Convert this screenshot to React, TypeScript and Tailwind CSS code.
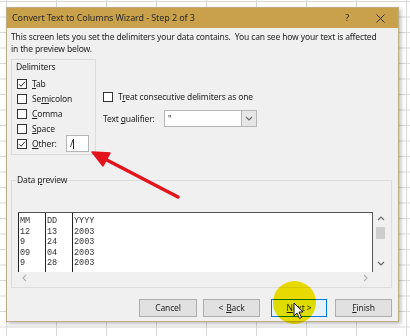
import React from "react";

function Check({ checked }: { checked?: boolean }) {
  return (
    <span className="w-[10px] h-[10px] shrink-0 border border-[#333] bg-white flex items-center justify-center">
      {checked && (
        <svg width="8" height="8" viewBox="0 0 8 8">
          <path d="M1 4.2 L3.1 6.3 L7 1.6" fill="none" stroke="#333" strokeWidth="1" />
        </svg>
      )}
    </span>
  );
}

function Row({ checked, children, w }: { checked?: boolean; children: React.ReactNode; w?: string }) {
  return (
    <div className="h-[15px] flex items-center">
      <Check checked={checked} />
      <span className={"ml-[5px] " + (w ?? "")}>{children}</span>
    </div>
  );
}

function Chevron({ dir, color = "#8a8a8a" }: { dir: "up" | "down" | "left" | "right"; color?: string }) {
  const d =
    dir === "up"
      ? "M1 5 L4 2 L7 5"
      : dir === "down"
      ? "M1 2 L4 5 L7 2"
      : dir === "left"
      ? "M5 1 L2 4 L5 7"
      : "M2 1 L5 4 L2 7";
  return (
    <svg width="8" height="8" viewBox="0 0 8 8">
      <path d={d} fill="none" stroke={color} strokeWidth="1.1" />
    </svg>
  );
}

const rows = [
  ["MM", "DD", "YYYY"],
  ["12", "13", "2003"],
  ["9", "24", "2003"],
  ["09", "04", "2003"],
  ["9", "28", "2003"],
];

export default function App() {
  return (
    <div className="relative w-[410px] h-[336px] overflow-hidden bg-white bg-[linear-gradient(to_right,#d8d8d8_1px,transparent_1px),linear-gradient(to_bottom,#d8d8d8_1px,transparent_1px)] bg-[size:50px_15.5px] bg-[position:6px_1px] pt-[7px] pl-[6px] font-['Noto_Sans',sans-serif] text-[8.5px] tracking-[-0.15px] text-[#1e1e1e]">
      {/* Dialog */}
      <div className="w-[393px] h-[315px] flex flex-col border border-[#bcae84] bg-[#f0f0f0] shadow-[2px_2px_4px_rgba(0,0,0,0.25)]">
        {/* Title bar */}
        <div className="h-[20px] shrink-0 bg-[#c9a14a] flex items-center pl-[5px] pr-[13px] text-[9px] tracking-[-0.1px] text-[#2a2a2a]">
          <span>Convert Text to Columns Wizard - Step 2 of 3</span>
          <span className="ml-auto mr-[27px]">?</span>
          <svg width="9" height="9" viewBox="0 0 9 9">
            <path d="M0.5 0.5 L8.5 8.5 M8.5 0.5 L0.5 8.5" stroke="#333" strokeWidth="1" />
          </svg>
        </div>

        {/* Body */}
        <div className="flex-1 flex flex-col pl-[4px] pr-[6px]">
          <div className="pt-[3px] leading-[12px] whitespace-nowrap">
            This screen lets you set the delimiters your data contains.&nbsp; You can see how your text is affected
            <br />
            in the preview below.
          </div>

          <div className="mt-[4px] flex leading-[12px]">
            <div className="w-[85px] h-[96px] border border-[#dcdcdc] pl-[5px] pt-[1px]">
              <div className="-ml-[1px]">Delimiters</div>
              <div className="mt-[3px]">
                <Row checked>
                  <u>T</u>ab
                </Row>
                <Row>
                  Se<u>m</u>icolon
                </Row>
                <Row>
                  <u>C</u>omma
                </Row>
                <Row>
                  <u>S</u>pace
                </Row>
                <div className="h-[15px] flex items-center">
                  <Check checked />
                  <span className="ml-[5px] w-[34px]">
                    <u>O</u>ther:
                  </span>
                  <div className="w-[23px] h-[17px] bg-white border border-[#b5b5b5] flex items-center pl-[3px]">
                    <span className="text-[9px]">/</span>
                    <span className="w-px h-[10px] bg-[#222]" />
                  </div>
                </div>
              </div>
            </div>

            <div className="ml-[7px] pt-[30px]">
              <Row>
                T<u>r</u>eat consecutive delimiters as one
              </Row>
              <div className="mt-[6px] h-[17px] flex items-center">
                <span className="w-[61px]">
                  Text <u>q</u>ualifier:
                </span>
                <div className="w-[93px] h-[17px] bg-white border border-[#b5b5b5] flex">
                  <span className="flex-1 pl-[3px] leading-[15px]">"</span>
                  <span className="w-[15px] h-full bg-[#e6e6e6] border-l border-[#b5b5b5] flex items-center justify-center">
                    <Chevron dir="down" color="#6a6a6a" />
                  </span>
                </div>
              </div>
            </div>
          </div>

          {/* Data preview */}
          <fieldset className="mt-[19px] h-[114px] w-[381px] border border-[#dcdcdc] pl-[4px] leading-[12px]">
            <legend className="px-[1px]">
              Data <u>p</u>review
            </legend>
            <div className="mt-[26px] ml-[2px] w-[370px] h-[72px] grid grid-cols-[355px_15px] grid-rows-[60px_12px]">
              <div className="bg-white border-t border-r border-[#555] flex font-['Liberation_Mono',monospace] text-[8.5px] tracking-normal leading-[10.5px] text-[#333]">
                {[0, 1, 2].map((c) => (
                  <div key={c} className={"border-l border-[#222] pt-[3px] pl-[1px] " + (c < 2 ? "w-[27px]" : "flex-1")}>
                    {rows.map((r, i) => (
                      <div key={i}>{r[c]}</div>
                    ))}
                  </div>
                ))}
              </div>
              <div className="flex flex-col items-center pt-[3px]">
                <Chevron dir="up" color="#666" />
                <div className="mt-[4px] w-[9px] h-[12px] bg-[#cdcdcd]" />
                <div className="mt-auto mb-[4px]">
                  <Chevron dir="down" color="#666" />
                </div>
              </div>
              <div className="flex items-center justify-between pl-[3px] pr-[3px]">
                <Chevron dir="left" color="#b0b0b0" />
                <Chevron dir="right" color="#b0b0b0" />
              </div>
              <div />
            </div>
          </fieldset>

          {/* Buttons */}
          <div className="mt-[11px] flex justify-end">
            <div className="w-[58px] h-[18px] bg-[#e1e1e1] border border-[#adadad] flex items-center justify-center">Cancel</div>
            <div className="ml-[6px] w-[57px] h-[18px] bg-[#e1e1e1] border border-[#adadad] flex items-center justify-center">
              &lt; <u className="ml-[3px]">B</u>ack
            </div>
            <div className="ml-[11px] w-[56px] h-[18px] bg-[#e5f1fb] border border-[#0078d7] flex items-center justify-center">
              <u>N</u>ext &gt;
            </div>
            <div className="ml-[8px] w-[57px] h-[18px] bg-[#e1e1e1] border border-[#adadad] flex items-center justify-center">
              <u>F</u>inish
            </div>
          </div>
        </div>
      </div>

      {/* Yellow highlight */}
      <div className="absolute left-[273px] top-[281px] w-[43px] h-[43px] rounded-full bg-[#f7e800] mix-blend-multiply blur-[0.6px]" />

      {/* Mouse cursor */}
      <svg className="absolute left-[293px] top-[302px]" width="12" height="18" viewBox="0 0 12 18">
        <path d="M1 1 L1 14 L4 11 L6.5 16.5 L8.5 15.5 L6 10 L10 10 Z" fill="#fff" stroke="#111" strokeWidth="1" strokeLinejoin="round" />
      </svg>

      {/* Red arrow */}
      <svg className="absolute left-0 top-0 pointer-events-none" width="410" height="336" viewBox="0 0 410 336">
        <line x1="103" y1="158" x2="178" y2="197" stroke="#e3141b" strokeWidth="3.5" strokeLinecap="round" />
        <path d="M92 152 L110 153 L103 166 Z" fill="#e3141b" stroke="#e3141b" strokeWidth="1.5" strokeLinejoin="round" />
      </svg>
    </div>
  );
}
